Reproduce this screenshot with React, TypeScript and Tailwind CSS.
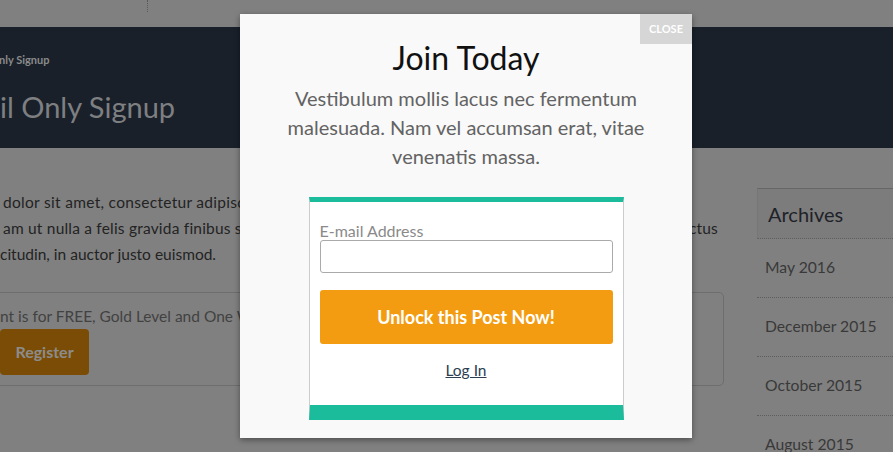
import React from "react";

export default function App() {
  const archives = ["May 2016", "December 2015", "October 2015", "August 2015"];
  return (
    <div className="relative w-[893px] h-[452px] overflow-hidden bg-[#808080] font-['Lato',sans-serif]">
      {/* top bar */}
      <div className="h-[27px] flex">
        <div className="w-[148px] h-[12px] border-r border-dotted border-[#5a5a5a]" />
      </div>
      {/* header */}
      <div className="h-[121px] bg-[#19202a] pt-[25px] overflow-hidden">
        <div className="text-[11px] leading-[16px] font-bold text-[#8a8a8a] whitespace-nowrap -ml-[1px]">nly Signup</div>
        <div className="mt-[21px] text-[29px] leading-[36px] text-[#7e7f81] whitespace-nowrap">il Only Signup</div>
      </div>
      {/* content */}
      <div className="flex">
        <div className="w-[725px] shrink-0">
          <div className="mt-[41px] text-[15.5px] leading-[26px] text-[#232323] whitespace-nowrap">
            <div className="pl-[3px] tracking-[0.3px]">dolor sit amet, consectetur adipiscing elit, sed do eiusmod tempor incididunt.</div>
            <div className="flex justify-between w-[718px] pl-[3px] tracking-[0.2px]">
              <span>am ut nulla a felis gravida finibus sit amet</span>
              <span>ctus</span>
            </div>
            <div>citudin, in auctor justo euismod.</div>
          </div>
          <div className="mt-[25px] -ml-[10px] w-[734px] border border-[#6e6e6e] rounded-[5px] pl-[9px] pt-[11px] pb-[10px]">
            <div className="text-[15.5px] leading-[24px] text-[#424242] whitespace-nowrap">nt is for FREE, Gold Level and One Week Trial members.</div>
            <div className="mt-[1px] w-[89px] h-[46px] rounded-[4px] bg-[#7a4c06] flex items-center justify-center text-[16px] font-bold text-[#8c8c8c]">
              Register
            </div>
          </div>
        </div>
        <div className="ml-[32px] mt-[40px] flex-1">
          <div className="h-[51px] border-t border-[#666] border-l border-l-[#777] bg-[#7c7c7c] border-b border-b-[#5e5e5e] flex items-center pl-[10px] text-[20px] text-[#1e2228]" style={{ borderBottomStyle: "dotted" }}>
            Archives
          </div>
          {archives.map((a) => (
            <div key={a} className="h-[59px] border-b border-dotted border-[#5e5e5e] flex items-center pl-[8px] text-[15.7px] text-[#393939] whitespace-nowrap">
              {a}
            </div>
          ))}
        </div>
      </div>

      {/* modal */}
      <div className="absolute left-[240px] top-[14px] w-[452px] h-[424px] bg-[#f9f9f9] shadow-[0_2px_6px_rgba(0,0,0,0.4)] flex flex-col items-center">
        <div className="absolute top-0 right-0 w-[52px] h-[30px] bg-[#d6d6d6] text-white text-[11px] font-bold flex items-center justify-center">
          CLOSE
        </div>
        <div className="pt-[24px] text-[32px] leading-[40px] text-[#111]">Join Today</div>
        <div className="mt-[6px] w-[370px] text-center text-[20px] leading-[29px] text-[#636363]">
          Vestibulum mollis lacus nec fermentum malesuada. Nam vel accumsan erat, vitae venenatis massa.
        </div>
        <div className="mt-[26px] w-[315px] bg-white border-t-[5px] border-t-[#1abc9c] border-x border-x-[#cccccc] border-b-[15px] border-b-[#1abc9c] px-[10px] pt-[20px] pb-[25px]">
          <div className="text-[16px] leading-[18px] text-[#8a8a8a]">E-mail Address</div>
          <input className="block w-full h-[33px] border border-[#aaaaaa] rounded-[3px] bg-white outline-none" />
          <div className="mt-[17px] h-[54px] rounded-[3px] bg-[#f39c12] flex items-center justify-center text-white text-[18px] font-bold">
            Unlock this Post Now!
          </div>
          <div className="mt-[16px] text-center text-[15.5px] leading-[20px]">
            <a className="underline text-[#2c3e50]" href="#">Log In</a>
          </div>
        </div>
      </div>
    </div>
  );
}
